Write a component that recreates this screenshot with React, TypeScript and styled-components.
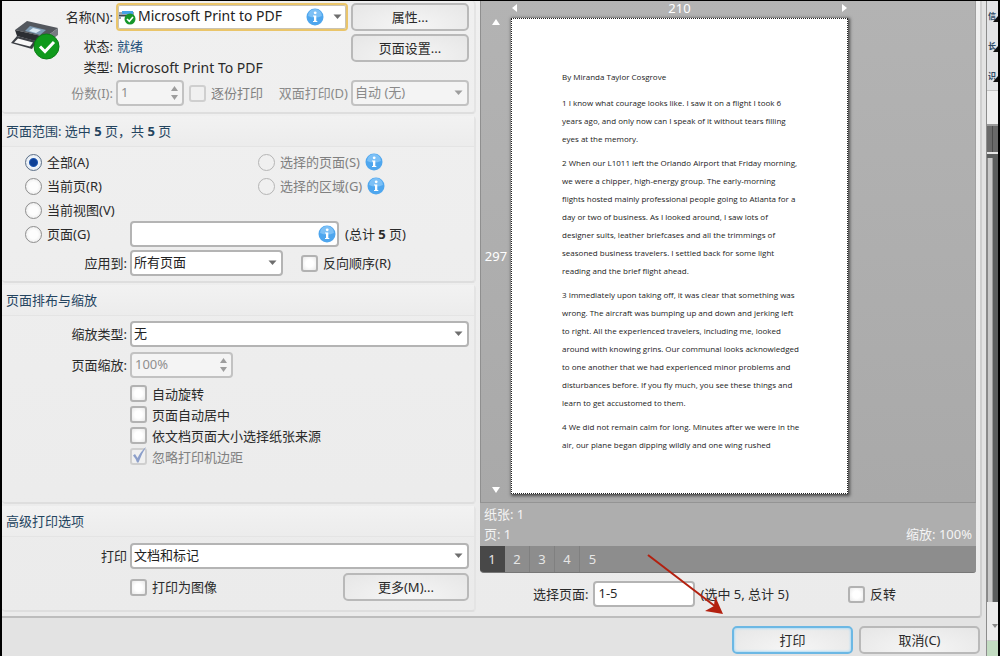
import React, { ReactNode } from "react";
import styled, { createGlobalStyle, css } from "styled-components";

const Global = createGlobalStyle`
  *, *::before, *::after { box-sizing: border-box; }
  body {
    margin: 0;
    background: #000;
    color: #2a2a2a;
    font-family: "Noto Sans", "Noto Sans CJK SC", sans-serif;
    font-size: 13px;
    line-height: 18px;
  }
  button, input, select { font: inherit; color: inherit; margin: 0; }
`;

const Screen = styled.div`
  display: flex;
  min-height: 100vh;
  padding: 1px 2px 1px 2px;
  background: #000;
  overflow: hidden;
`;

const Dialog = styled.form`
  flex: 1;
  min-width: 0;
  display: flex;
  flex-direction: column;
  padding-right: 4px;
  background: #e3e3e3;
  border-right: 1px solid #8c8c8c;
`;

const Content = styled.div`
  flex: 1;
  display: flex;
  background: linear-gradient(#f0f0f0, #ebebeb);
  border-right: 2px solid #cfcfcf;
  border-bottom: 2px solid #bdbdbd;
  border-bottom-right-radius: 4px;
`;

const Options = styled.div`
  flex: 0 0 478px;
  display: flex;
  flex-direction: column;
  gap: 2px;
  padding: 0 4px 4px 0;
`;

const Section = styled.section<{ $grow?: boolean }>`
  ${(p) => p.$grow && css`flex: 1;`}
  border-right: 2px solid #e4e4e4;
  border-bottom: 2px solid #dedede;
  border-radius: 4px;
`;

const Heading = styled.h2`
  margin: 0;
  padding: 6px 4px;
  height: 31px;
  font-size: 13px;
  font-weight: 400;
  line-height: 18px;
  color: #24445f;
  background: linear-gradient(#f2f2f2, #ececec);
  border-bottom: 1px solid #e4e4e4;
`;

const PrinterSection = styled(Section)`
  display: flex;
  padding: 2px 5px 6px 0;
`;

const PrinterIconBox = styled.div`
  flex: 0 0 60px;
  padding: 14px 0 0 7px;
`;

const PrinterForm = styled.div`
  flex: 1;
  min-width: 0;
  display: flex;
  flex-direction: column;
  gap: 3px;
`;

const Row = styled.div<{ $h?: number; $gap?: number }>`
  display: flex;
  align-items: center;
  gap: ${(p) => p.$gap ?? 3}px;
  height: ${(p) => p.$h ?? 26}px;
`;

const InfoRow = styled.div`
  display: flex;
  justify-content: space-between;
  align-items: flex-start;
  height: 43px;
`;

const Facts = styled.dl`
  display: grid;
  grid-template-columns: 51px auto;
  column-gap: 4px;
  margin: 0;
  padding-top: 2px;
  line-height: 21px;
  dt { text-align: right; }
  dd { margin: 0; }
`;

const Blue = styled.span`color: #24507c;`;

const DeviceType = styled.dd`font-size: 14px;`;

const Caption = styled.label<{ $w?: number; $dim?: boolean }>`
  flex: none;
  width: ${(p) => (p.$w ? `${p.$w}px` : "auto")};
  display: flex;
  justify-content: flex-end;
  white-space: nowrap;
  color: ${(p) => (p.$dim ? "#8a8a8a" : "inherit")};
`;

const PushButton = styled.button<{ $w: number; $primary?: boolean }>`
  flex: none;
  width: ${(p) => p.$w}px;
  height: 28px;
  padding: 0;
  border: 2px solid ${(p) => (p.$primary ? "#6cb8e4" : "#b9b9b9")};
  border-radius: 5px;
  background: radial-gradient(ellipse at 50% 90%, #f6f6f6, #e6e6e6);
  ${(p) => p.$primary && css`box-shadow: inset 0 0 2px 1px #b4def6;`}
`;

const fieldFrame = css<{ $focus?: boolean }>`
  border: 2px solid ${(p) => (p.$focus ? "#eac56a" : "#b4b4b4")};
  border-radius: 4px;
  background: #fff;
`;

const SelectBox = styled.span<{ $w?: number; $focus?: boolean; $dim?: boolean }>`
  ${fieldFrame}
  position: relative;
  flex: ${(p) => (p.$w ? "none" : "1")};
  width: ${(p) => (p.$w ? `${p.$w}px` : "auto")};
  height: ${(p) => (p.$focus ? 28 : 26)}px;
  display: flex;
  align-items: center;
  color: ${(p) => (p.$dim ? "#8a8a8a" : "#222")};
  ${(p) => p.$dim && css`background: #f4f4f4; border-color: #c2c2c2;`}
  ${(p) => p.$focus && css`box-shadow: inset 0 0 0 1px #c9c3b4; font-size: 14px;`}
`;

const Select = styled.select<{ $indent?: number }>`
  appearance: none;
  flex: 1;
  width: 100%;
  height: 22px;
  padding: 0 20px 2px ${(p) => p.$indent ?? 2}px;
  border: 0;
  outline: 0;
  background: transparent;
  opacity: 1;
`;

const Arrow = styled.svg`
  position: absolute;
  right: 4px;
  top: 50%;
  margin-top: -3px;
  pointer-events: none;
`;

const Lead = styled.span`
  position: absolute;
  left: 0;
  top: 4px;
  display: flex;
  pointer-events: none;
`;

const Trail = styled.span<{ $right: number }>`
  position: absolute;
  right: ${(p) => p.$right}px;
  top: 50%;
  margin-top: -9px;
  display: flex;
  pointer-events: none;
`;

const Field = styled.span<{ $w: number; $dim?: boolean }>`
  ${fieldFrame}
  position: relative;
  flex: none;
  display: flex;
  align-items: center;
  width: ${(p) => p.$w}px;
  height: 26px;
  ${(p) => p.$dim && css`background: #f4f4f4; border-color: #c2c2c2; color: #8f8f8f;`}
`;

const TextInput = styled.input`
  flex: 1;
  min-width: 0;
  height: 22px;
  padding: 0 2px 2px 3px;
  border: 0;
  outline: 0;
  background: transparent;
`;

const Steps = styled.span`
  display: flex;
  flex-direction: column;
  gap: 1px;
  padding-right: 3px;
`;

const Step = styled.button`
  display: flex;
  justify-content: center;
  align-items: center;
  width: 10px;
  height: 8px;
  padding: 0;
  border: 0;
  background: none;
`;

const Choice = styled.label<{ $dim?: boolean }>`
  flex: none;
  display: flex;
  align-items: center;
  gap: 5px;
  white-space: nowrap;
  color: ${(p) => (p.$dim ? "#808080" : "inherit")};
`;

const Radio = styled.input`
  appearance: none;
  width: 17px;
  height: 17px;
  border: 1px solid #8e8e8e;
  border-radius: 50%;
  background: radial-gradient(#fdfdfd 40%, #e4e4e4);
  &:checked { background: radial-gradient(circle, #0c3f96 0 3px, #1d56b0 4px, #eef3f9 5px, #dfe5ec); border-color: #5c6f88; }
  &:disabled { border-color: #b5b5b5; background: #f0f0f0; }
`;

const Tick = styled.span`
  position: relative;
  display: flex;
  svg { position: absolute; left: 2px; top: -2px; pointer-events: none; }
`;

const Check = styled.input`
  appearance: none;
  width: 17px;
  height: 17px;
  border: 2px solid #b2b2b2;
  border-radius: 3px;
  background: radial-gradient(#ffffff 40%, #e8e8e8);
  &:disabled { border-color: #cfcfcf; background: #f0f0f0; }
`;

const RangeBody = styled.div`
  padding: 3px 6px 5px 23px;
`;

const RangeGrid = styled.div`
  display: grid;
  grid-template-columns: 233px 1fr;
  grid-auto-rows: 24px;
  align-items: center;
`;

const WithInfo = styled.span`
  display: flex;
  align-items: center;
  gap: 5px;
`;

const RangeTotal = styled.span`
  flex: 0 0 123px;
`;

const ApplyRow = styled(Row)`
  margin-top: 4px;
`;

const Collate = styled.span`
  padding-left: 2px;
`;

const Reverse = styled.span`
  padding-left: 15px;
`;

const FormBody = styled.div<{ $top: number; $gap: number }>`
  display: flex;
  flex-direction: column;
  gap: ${(p) => p.$gap}px;
  padding: ${(p) => p.$top}px 5px 9px 0;
`;

const MoreRow = styled(Row)`
  height: 28px;
  justify-content: space-between;
  padding-left: 128px;
`;

const Checks = styled.div`
  padding: 0 0 0 128px;
  display: grid;
  grid-auto-rows: 21px;
  align-items: center;
  justify-items: start;
`;

const Spacer = styled.span`flex: 1;`;

const Preview = styled.div`
  flex: 1;
  min-width: 0;
  display: flex;
  flex-direction: column;
  padding-right: 4px;
`;

const Stage = styled.div`
  display: grid;
  grid-template-columns: 30px 337px 1fr;
  grid-template-rows: 17px auto;
  padding-bottom: 8px;
  color: #fff;
  background: linear-gradient(#b3b3b3, #a9a9a9);
  border-left: 1px solid #8f8f8f;
  border-right: 1px solid #a0a0a0;
  border-bottom: 1px solid #949494;
`;

const Across = styled.div`
  grid-column: 2;
  display: flex;
  align-items: center;
  justify-content: space-between;
  height: 13px;
`;

const Down = styled.div`
  grid-row: 2;
  display: flex;
  flex-direction: column;
  align-items: center;
  justify-content: space-between;
`;

const Paper = styled.article`
  grid-row: 2;
  grid-column: 2;
  aspect-ratio: 337 / 476;
  padding: 49px 0 0 50px;
  border: 1px dotted #222;
  background: #fff;
  color: #222;
  box-shadow: 1px 1px 3px 1px #4c4c4c;
  font-family: "Open Sans", sans-serif;
  font-size: 8px;
  line-height: 18px;
  white-space: pre;
  p { margin: 0 0 6px; }
  p:first-child { margin-bottom: 8px; }
`;

const Details = styled.div`
  display: flex;
  justify-content: space-between;
  align-items: flex-end;
  height: 43px;
  padding: 0 4px 2px;
  line-height: 20px;
  color: #f4f4f4;
  background: #aeaeae;
`;

const Tabs = styled.nav`
  display: flex;
  height: 27px;
  background: #8d8d8d;
  border-radius: 0 0 3px 4px;
  border-bottom: 1px solid #777;
  overflow: hidden;
`;

const Tab = styled.button<{ $on?: boolean }>`
  width: 25px;
  padding: 0;
  border: 0;
  border-right: 1px solid ${(p) => (p.$on ? "#484848" : "#808080")};
  background: ${(p) => (p.$on ? "#484848" : "transparent")};
  color: #e6e6e6;
  &:last-child { border-right: 0; }
`;

const SelectRow = styled.div`
  display: flex;
  align-items: center;
  gap: 5px;
  padding: 8px 80px 9px 53px;
`;

const Footer = styled.footer`
  display: flex;
  justify-content: flex-end;
  gap: 6px;
  padding: 8px 2px 2px;
`;

const Behind = styled.aside`
  flex: 0 0 11px;
  display: flex;
  flex-direction: column;
  overflow: hidden;
  background: #5c5e5e;
`;

const Ribbon = styled.div`
  height: 90px;
  background: #e3e4e6;
  border-bottom: 1px solid #c4c4c4;
`;

const RibbonItem = styled.div`
  position: relative;
  display: flex;
  align-items: center;
  height: 30px;
  padding-left: 1px;
  font-size: 8px;
  line-height: 12px;
  font-weight: 700;
  color: #2d4a66;
  svg { position: absolute; right: 0; top: 0; }
`;

const Blank = styled.div`
  height: 35px;
  background: #f0f0f0;
  border-bottom: 2px solid #9a9a9a;
`;

const Ruler = styled.div`
  height: 28px;
  background: linear-gradient(90deg, #6a6a6a 0 5px, #4c4c4c 5px 6px, #6a6a6a 6px);
  border-bottom: 2px solid #e6e6e6;
`;

const Track = styled.div`
  flex: 1;
  margin-top: 4px;
  width: 6px;
  background: linear-gradient(90deg, #8a8a8a 0 1px, #c9c9c9 1px 5px, #9a9a9a 5px);
`;

const Corner = styled.div`
  height: 38px;
  padding: 13px 0 0 5px;
  background: #ececec;
`;

const Status = styled.div`
  height: 16px;
  background: #c3dcc2;
  border-top: 1px solid #cfcfcf;
`;

const RedArrow = styled.svg`
  position: absolute;
  left: 646px;
  top: 552px;
  pointer-events: none;
`;

const DropMark = ({ color = "#6e6e6e" }: { color?: string }) => (
  <Arrow width="9" height="6" viewBox="0 0 9 6" aria-hidden="true">
    <path d="M0.5 0.5h8L4.5 5z" fill={color} />
  </Arrow>
);

const Info = () => (
  <svg width="18" height="18" viewBox="0 0 18 18" aria-hidden="true">
    <circle cx="9" cy="9" r="8.5" fill="#4ea6ee" />
    <path d="M2 8a7 7 0 0 1 14 0q-7 3-14 0z" fill="#7cc0f6" />
    <circle cx="9.2" cy="4.8" r="1.4" fill="#fff" />
    <path d="M7 7.5h3.3V13h1v1H7v-1h1V8.5H7z" fill="#fff" />
  </svg>
);

const PrinterIcon = () => (
  <svg width="53" height="44" viewBox="0 0 53 44" aria-hidden="true">
    <path d="M18 4L49 11 37 20 6 13z" fill="#53575d" />
    <path d="M6 13l31 7v7L8 19z" fill="#2b2e33" />
    <path d="M37 20l12-9v7l-12 9z" fill="#777b81" />
    <path d="M21 9l16 4-6 5-15-4z" fill="#7f9cb4" />
    <path d="M24 11l8 2-5 3-7-2z" fill="#d9e8f3" />
    <path d="M8 19l20 5-5 8-21-6z" fill="#3c3f45" />
    <path d="M9 21.500l15 4-3 4L5 25.500z" fill="#f8f8f8" />
    <circle cx="37.500" cy="29.500" r="12.500" fill="#109a1c" stroke="#0a7c14" />
    <path d="M31 29.500l5 5 9-9.500" fill="none" stroke="#fff" strokeWidth="3" />
  </svg>
);

const MiniPrinter = () => (
  <svg width="19" height="16" viewBox="0 0 19 16" aria-hidden="true">
    <path d="M1 3h15v7H1z" fill="#9aa5ae" />
    <path d="M4 2h11v3H4z" fill="#45a2e6" />
    <path d="M1 6h15v1H1z" fill="#3e444a" />
    <path d="M3 8h6v4H3z" fill="#fff" />
    <circle cx="12" cy="10" r="5.5" fill="#15962a" />
    <path d="M9 10l2.3 2.300L15 8" fill="none" stroke="#fff" strokeWidth="1.6" />
  </svg>
);

const Triangle = ({ d }: { d: string }) => (
  <svg width="8" height="8" viewBox="0 0 8 8" aria-hidden="true">
    <path d={d} fill="#fff" />
  </svg>
);

const Spinner = ({ id, value, w }: { id: string; value: string; w: number }) => (
  <Field $w={w} $dim>
    <TextInput id={id} defaultValue={value} disabled />
    <Steps>
      <Step type="button" disabled aria-label="增加">
        <svg width="9" height="5" viewBox="0 0 9 5"><path d="M1 5h7L4.5 0z" fill="#9d9d9d" /></svg>
      </Step>
      <Step type="button" disabled aria-label="减少">
        <svg width="9" height="5" viewBox="0 0 9 5"><path d="M1 0h7L4.5 5z" fill="#9d9d9d" /></svg>
      </Step>
    </Steps>
  </Field>
);

const CheckBox = ({ children, dim, on }: { children: ReactNode; dim?: boolean; on?: boolean }) => (
  <Choice $dim={dim}>
    <Tick>
      <Check type="checkbox" disabled={dim} defaultChecked={on} />
      {on && (
        <svg width="16" height="18" viewBox="0 0 16 18" aria-hidden="true">
          <path d="M1 9.5l2-1.5 2.5 4Q9 5 14 1 9.5 8 6.5 16.5H5Q3.5 12 1 9.500z" fill="#8c9fca" />
        </svg>
      )}
    </Tick>
    {children}
  </Choice>
);

const RadioButton = ({ children, dim, on }: { children: ReactNode; dim?: boolean; on?: boolean }) => (
  <Choice $dim={dim}>
    <Radio type="radio" name="range" disabled={dim} defaultChecked={on} />
    {children}
  </Choice>
);

const paragraphs = [
  ["By Miranda Taylor Cosgrove"],
  [
    "1 I know what courage looks like. I saw it on a flight I took 6",
    "years ago, and only now can I speak of it without tears filling",
    "eyes at the memory.",
  ],
  [
    "2 When our L1011 left the Orlando Airport that Friday morning,",
    "we were a chipper, high-energy group. The early-morning",
    "flights hosted mainly professional people going to Atlanta for a",
    "day or two of business. As I looked around, I saw lots of",
    "designer suits, leather briefcases and all the trimmings of",
    "seasoned business travelers. I settled back for some light",
    "reading and the brief flight ahead.",
  ],
  [
    "3 Immediately upon taking off, it was clear that something was",
    "wrong. The aircraft was bumping up and down and jerking left",
    "to right. All the experienced travelers, including me, looked",
    "around with knowing grins. Our communal looks acknowledged",
    "to one another that we had experienced minor problems and",
    "disturbances before. If you fly much, you see these things and",
    "learn to get accustomed to them.",
  ],
  [
    "4 We did not remain calm for long. Minutes after we were in the",
    "air, our plane began dipping wildly and one wing rushed",
  ],
];

export default function App() {
  return (
    <Screen>
      <Global />
      <Dialog onSubmit={(e) => e.preventDefault()}>
        <Content>
          <Options>
            <PrinterSection>
              <PrinterIconBox><PrinterIcon /></PrinterIconBox>
              <PrinterForm>
                <Row $h={28}>
                  <Caption $w={51} htmlFor="printer">名称(N):</Caption>
                  <SelectBox $focus>
                    <Lead><MiniPrinter /></Lead>
                    <Select id="printer" $indent={20}><option>Microsoft Print to PDF</option></Select>
                    <Trail $right={22}><Info /></Trail>
                    <DropMark />
                  </SelectBox>
                  <PushButton type="button" $w={118}>属性...</PushButton>
                </Row>
                <InfoRow>
                  <Facts>
                    <dt>状态:</dt><dd><Blue>就绪</Blue></dd>
                    <dt>类型:</dt><DeviceType>Microsoft Print To PDF</DeviceType>
                  </Facts>
                  <PushButton type="button" $w={118}>页面设置...</PushButton>
                </InfoRow>
                <Row>
                  <Caption $w={51} $dim htmlFor="copies">份数(I):</Caption>
                  <Spinner id="copies" value="1" w={68} />
                  <Collate><CheckBox dim>逐份打印</CheckBox></Collate>
                  <Spacer />
                  <Caption $dim htmlFor="duplex">双面打印(D)</Caption>
                  <SelectBox $w={118} $dim>
                    <Select id="duplex" disabled><option>自动 (无)</option></Select>
                    <DropMark color="#9d9d9d" />
                  </SelectBox>
                </Row>
              </PrinterForm>
            </PrinterSection>

            <Section>
              <Heading>页面范围: 选中 <b>5</b> 页，共 <b>5</b> 页</Heading>
              <RangeBody>
                <RangeGrid>
                  <RadioButton on>全部(A)</RadioButton>
                  <WithInfo><RadioButton dim>选择的页面(S)</RadioButton><Info /></WithInfo>
                  <RadioButton>当前页(R)</RadioButton>
                  <WithInfo><RadioButton dim>选择的区域(G)</RadioButton><Info /></WithInfo>
                  <RadioButton>当前视图(V)</RadioButton>
                </RangeGrid>
                <Row $h={24} $gap={6}>
                  <RadioButton>页面(G)</RadioButton>
                  <Spacer />
                  <Field $w={209}>
                    <TextInput aria-label="页面" />
                    <Trail $right={1}><Info /></Trail>
                  </Field>
                  <RangeTotal>(总计 <b>5</b> 页)</RangeTotal>
                </Row>
                <ApplyRow>
                  <Caption $w={102} htmlFor="apply">应用到:</Caption>
                  <SelectBox $w={153}>
                    <Select id="apply"><option>所有页面</option></Select>
                    <DropMark />
                  </SelectBox>
                  <Reverse><CheckBox>反向顺序(R)</CheckBox></Reverse>
                </ApplyRow>
              </RangeBody>
            </Section>

            <Section $grow>
              <Heading>页面排布与缩放</Heading>
              <FormBody $top={5} $gap={5}>
                <Row>
                  <Caption $w={125} htmlFor="scaling">缩放类型:</Caption>
                  <SelectBox>
                    <Select id="scaling"><option>无</option></Select>
                    <DropMark />
                  </SelectBox>
                </Row>
                <Row>
                  <Caption $w={125} htmlFor="zoom">页面缩放:</Caption>
                  <Spinner id="zoom" value="100%" w={103} />
                </Row>
                <Checks>
                  <CheckBox>自动旋转</CheckBox>
                  <CheckBox>页面自动居中</CheckBox>
                  <CheckBox>依文档页面大小选择纸张来源</CheckBox>
                  <CheckBox dim on>忽略打印机边距</CheckBox>
                </Checks>
              </FormBody>
            </Section>

            <Section>
              <Heading>高级打印选项</Heading>
              <FormBody $top={6} $gap={4}>
                <Row>
                  <Caption $w={125} htmlFor="what">打印</Caption>
                  <SelectBox>
                    <Select id="what"><option>文档和标记</option></Select>
                    <DropMark />
                  </SelectBox>
                </Row>
                <MoreRow>
                  <CheckBox>打印为图像</CheckBox>
                  <PushButton type="button" $w={126}>更多(M)...</PushButton>
                </MoreRow>
              </FormBody>
            </Section>
          </Options>

          <Preview>
            <Stage>
              <Across>
                <Triangle d="M6 0v8L1 4z" /><span>210</span><Triangle d="M2 0v8l5-4z" />
              </Across>
              <Down>
                <Triangle d="M0 7h8L4 1z" /><span>297</span><Triangle d="M0 1h8L4 7z" />
              </Down>
              <Paper>
                {paragraphs.map((p) => <p key={p[0]}>{p.join("\n")}</p>)}
              </Paper>
            </Stage>
            <Details>
              <div>纸张: 1<br />页: 1</div>
              <div>缩放: 100%</div>
            </Details>
            <Tabs aria-label="页">
              {[1, 2, 3, 4, 5].map((n) => <Tab type="button" key={n} $on={n === 1}>{n}</Tab>)}
            </Tabs>
            <SelectRow>
              <Caption htmlFor="pages">选择页面:</Caption>
              <Field $w={102}><TextInput id="pages" defaultValue="1-5" /></Field>
              <span>(选中 5, 总计 5)</span>
              <Spacer />
              <CheckBox>反转</CheckBox>
            </SelectRow>
          </Preview>
        </Content>
        <Footer>
          <PushButton type="submit" $w={121} $primary>打印</PushButton>
          <PushButton type="button" $w={121}>取消(C)</PushButton>
        </Footer>
      </Dialog>

      <Behind aria-hidden="true">
        <Ribbon>
          {["信", "长", "识"].map((t) => (
            <RibbonItem key={t}>
              {t}
              <svg width="5" height="30" viewBox="0 0 5 30"><path d="M5 15v6H0z" fill="#111" /></svg>
            </RibbonItem>
          ))}
        </Ribbon>
        <Blank />
        <Ruler />
        <Track />
        <Corner>
          <svg width="6" height="5" viewBox="0 0 6 5"><path d="M0 0h6L3 4z" fill="#8a8a8a" /></svg>
        </Corner>
        <Status />
      </Behind>

      <RedArrow width="80" height="64" viewBox="0 0 80 64" aria-hidden="true">
        <path d="M2 3L70 55" stroke="#b3200f" strokeWidth="2" />
        <path d="M77 62L59 59 68 54 69 44z" fill="#b3200f" />
      </RedArrow>
    </Screen>
  );
}
